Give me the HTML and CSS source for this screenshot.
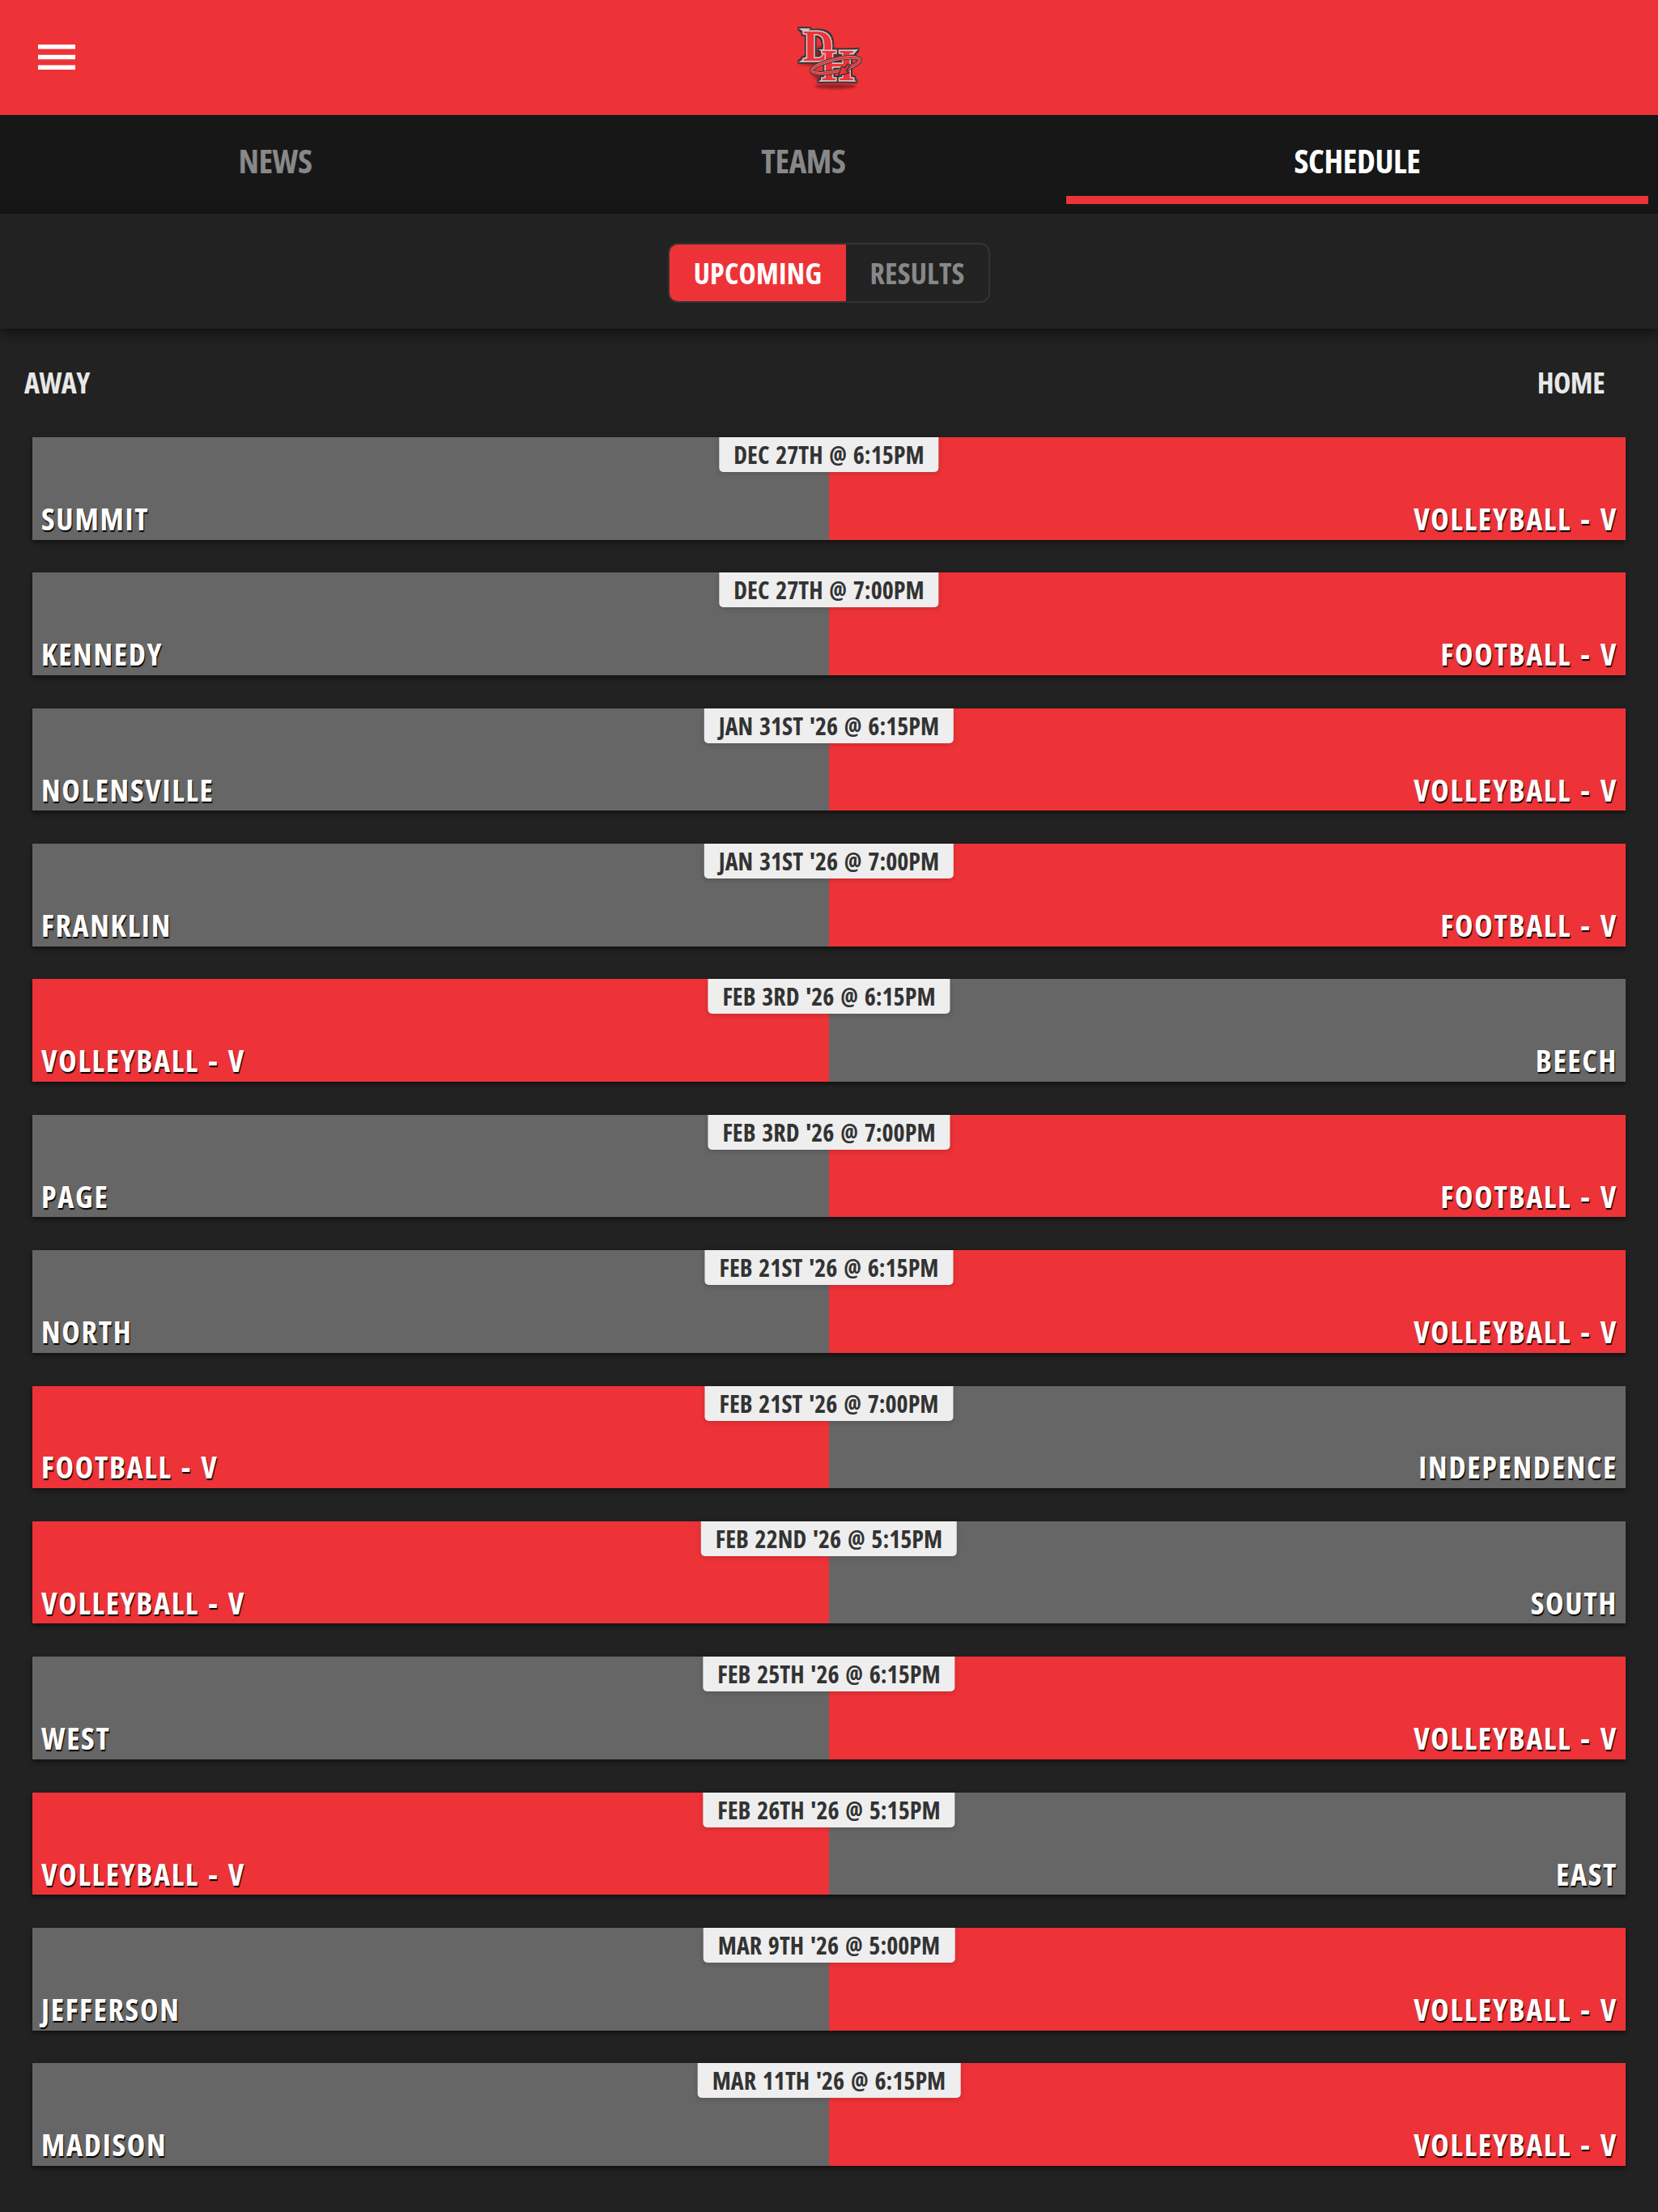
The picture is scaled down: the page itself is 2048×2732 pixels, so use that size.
FILE: index.html
```html
<!DOCTYPE html>
<html lang="en">
<head>
  <meta charset="UTF-8" />
  <meta name="viewport" content="width=device-width, initial-scale=1.0"/>
  <title>Schedule</title>
  <link rel="stylesheet" href="styles.css">
</head>
<body>

  <!-- Top bar -->
  <header class="header">
    <button class="menu-btn" aria-label="Menu">
      <svg viewBox="0 0 46 32"><path d="M0 0h46v5.6H0zM0 12.7h46v5.6H0zM0 25.4h46V31H0z"/></svg>
    </button>
    <svg class="logo" viewBox="0 0 390 360">
      <defs>
        <filter id="soft" x="-20%" y="-20%" width="140%" height="140%"><feGaussianBlur stdDeviation="4"/></filter>
        <!-- dark outline around whatever is drawn -->
        <filter id="outline" x="-20%" y="-20%" width="140%" height="140%">
          <feMorphology in="SourceAlpha" operator="dilate" radius="7" result="fat"/>
          <feFlood flood-color="#3b3638"/>
          <feComposite in2="fat" operator="in"/>
          <feMerge><feMergeNode/><feMergeNode in="SourceGraphic"/></feMerge>
        </filter>
      </defs>
      <g class="logo-shadow" filter="url(#soft)">
        <ellipse cx="215" cy="287" rx="78" ry="9"/>
        <path d="M75 205l60 5 40-25 5-60-30 20-20 50zM200 140l60 20 40-12-30 50-60 10zM125 240l45 12-8 24z"/>
      </g>
      <g class="logo-letters" filter="url(#outline)">
        <path d="M80 72l42 1-14 18zM80 198l42-3-14-18zM153 150h40l-16 14zM264 153l36-4-20 22zM152 270l36-3-8-16zM294 270l-36-3 10-16z"/>
        <text x="96" y="192" textLength="112" lengthAdjust="spacingAndGlyphs">D</text>
        <text x="164" y="265" textLength="120" lengthAdjust="spacingAndGlyphs">H</text>
      </g>
      <!-- tail loop -->
      <g fill="none" transform="rotate(-13 217 209)">
        <ellipse class="tail-dark" cx="217" cy="209" rx="91" ry="22"/>
        <ellipse class="tail-light" cx="217" cy="209" rx="91" ry="22"/>
        <ellipse class="tail-fill" cx="217" cy="209" rx="91" ry="22"/>
      </g>
      <path class="tail-tip" d="M262 204l-12 14-12-4-12 35 40-12-10-9 14-18z"/>
    </svg>
  </header>

  <!-- Tabs -->
  <nav class="tabs">
    <a class="tab">News</a>
    <a class="tab">Teams</a>
    <a class="tab active">Schedule</a>
  </nav>

  <div class="toolbar">
    <div class="segment">
      <button class="segment-btn selected">Upcoming</button>
      <button class="segment-btn">Results</button>
    </div>
  </div>

  <main class="schedule">
    <div class="columns">
      <span>Away</span>
      <span>Home</span>
    </div>

    <div class="games">
      <div class="game">
        <div class="side">Summit</div>
        <div class="side home own">Volleyball - V</div>
        <div class="date">Dec 27th @ 6:15pm</div>
      </div>
      <div class="game">
        <div class="side">Kennedy</div>
        <div class="side home own">Football - V</div>
        <div class="date">Dec 27th @ 7:00pm</div>
      </div>
      <div class="game">
        <div class="side">Nolensville</div>
        <div class="side home own">Volleyball - V</div>
        <div class="date">Jan 31st '26 @ 6:15pm</div>
      </div>
      <div class="game">
        <div class="side">Franklin</div>
        <div class="side home own">Football - V</div>
        <div class="date">Jan 31st '26 @ 7:00pm</div>
      </div>
      <div class="game">
        <div class="side own">Volleyball - V</div>
        <div class="side home">Beech</div>
        <div class="date">Feb 3rd '26 @ 6:15pm</div>
      </div>
      <div class="game">
        <div class="side">Page</div>
        <div class="side home own">Football - V</div>
        <div class="date">Feb 3rd '26 @ 7:00pm</div>
      </div>
      <div class="game">
        <div class="side">North</div>
        <div class="side home own">Volleyball - V</div>
        <div class="date">Feb 21st '26 @ 6:15pm</div>
      </div>
      <div class="game">
        <div class="side own">Football - V</div>
        <div class="side home">Independence</div>
        <div class="date">Feb 21st '26 @ 7:00pm</div>
      </div>
      <div class="game">
        <div class="side own">Volleyball - V</div>
        <div class="side home">South</div>
        <div class="date">Feb 22nd '26 @ 5:15pm</div>
      </div>
      <div class="game">
        <div class="side">West</div>
        <div class="side home own">Volleyball - V</div>
        <div class="date">Feb 25th '26 @ 6:15pm</div>
      </div>
      <div class="game">
        <div class="side own">Volleyball - V</div>
        <div class="side home">East</div>
        <div class="date">Feb 26th '26 @ 5:15pm</div>
      </div>
      <div class="game">
        <div class="side">Jefferson</div>
        <div class="side home own">Volleyball - V</div>
        <div class="date">Mar 9th '26 @ 5:00pm</div>
      </div>
      <div class="game">
        <div class="side">Madison</div>
        <div class="side home own">Volleyball - V</div>
        <div class="date">Mar 11th '26 @ 6:15pm</div>
      </div>
    </div>
  </main>

</body>
</html>
```
FILE: styles.css
```css
* {
  box-sizing: border-box;
}

body {
  margin: 0;
  min-height: 100vh;
  background: #222;
  color: #fff;
  font-family: "Open Sans", "Noto Sans", sans-serif;
  font-weight: 700;
  font-stretch: 75%;
  text-transform: uppercase;
  overflow: hidden;
}

button {
  border: none;
  background: none;
  padding: 0;
  font: inherit;
  color: inherit;
  text-transform: inherit;
}

/* Top bar */
.header {
  display: grid;
  grid-template-columns: 1fr 130px 1fr;
  align-items: center;
  height: 141.5px;
  background: #ed3338;
}

.menu-btn {
  width: 46px;
  height: 32px;
  margin-left: 47.3px;
}

.menu-btn svg {
  display: block;
  width: 46px;
  height: 32px;
  fill: #fff;
}

.logo {
  width: 130px;
  height: 120px;
  margin-left: 1px;
}

.logo-shadow {
  fill: #7d1a1e;
  opacity: 0.8;
}

.logo-letters text {
  font-family: "Liberation Serif", serif;
  font-size: 166px;
  font-weight: 700;
  fill: #ed3338;
  stroke: #d9c3c4;
  stroke-width: 9px;
  paint-order: stroke;
}

.logo-letters path {
  fill: #d9c3c4;
}

.tail-dark {
  stroke: #3b3638;
  stroke-width: 17px;
}

.tail-light {
  stroke: #d9a9ab;
  stroke-width: 10px;
}

.tail-fill {
  stroke: #ed3338;
  stroke-width: 7px;
}

.tail-tip {
  fill: #ed3338;
  stroke: #3b3638;
  stroke-width: 4px;
}

/* Tabs */
.tabs {
  display: grid;
  grid-template-columns: 680px 625px 1fr;
  height: 122.5px;
  padding-bottom: 12px;
  background: #171717;
}

.tab {
  margin: 0 12px;
  padding-top: 28px;
  font-size: 41px;
  letter-spacing: -0.4px;
  text-align: center;
  color: #888;
  border-bottom: 10.5px solid transparent;
}

.tab.active {
  color: #fff;
  border-color: #ed3338;
}

/* Upcoming / results switch */
.toolbar {
  display: flex;
  justify-content: center;
  align-items: center;
  height: 142px;
  padding-top: 4px;
  box-shadow: 0 4px 16px rgba(0, 0, 0, 0.6);
}

.segment {
  display: flex;
  width: 398px;
  height: 74px;
  border: 2px solid #333;
  border-radius: 12px;
  overflow: hidden;
}

.segment-btn {
  flex: 1;
  font-size: 36px;
  letter-spacing: 0.2px;
  color: #888;
}

.segment-btn.selected {
  flex: 0 0 218px;
  background: #ed3338;
  color: #fff;
}

/* Schedule list */
.schedule {
  padding: 0 40px;
}

.columns {
  display: flex;
  justify-content: space-between;
  height: 134px;
  margin: 0 -14px 0 -10px;
  padding: 42px 40px 0 0;
  font-size: 36px;
  letter-spacing: -0.5px;
  color: #e8e8e8;
}

.games {
  display: flex;
  flex-direction: column;
  gap: 40.8px;
}

.game {
  position: relative;
  display: flex;
  height: 126.57px;
  box-shadow: 0 3px 6px rgba(0, 0, 0, 0.5);
}

.side {
  flex: 1;
  display: flex;
  align-items: flex-end;
  padding: 0 10px 0.6px 11px;
  background: #666;
  font-size: 38px;
  letter-spacing: 1.7px;
  word-spacing: 2.7px;
  text-shadow: 1px 2px 1px #000;
}

.side.home {
  justify-content: flex-end;
}

.side.own {
  background: #ed3338;
}

/* Date badge hangs from the top of the row, over both sides */
.date {
  position: absolute;
  top: 0;
  left: 50%;
  transform: translateX(-50%);
  padding: 0 18px;
  background: #eee;
  color: #333;
  font-size: 30px;
  line-height: 43px;
  word-spacing: 2.4px;
  white-space: nowrap;
  border-radius: 0 0 5px 5px;
  box-shadow: 0 2px 6px rgba(0, 0, 0, 0.15);
}
```
